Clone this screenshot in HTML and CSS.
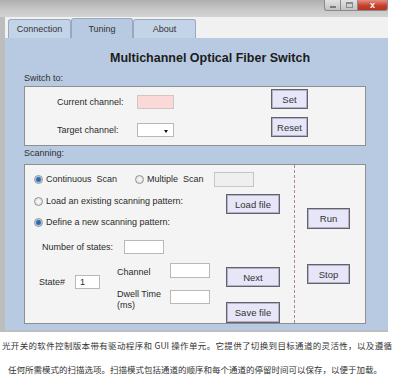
FILE: index.html
```html
<!DOCTYPE html>
<html>
<head>
<meta charset="utf-8">
<link rel="stylesheet" href="styles.css">
</head>
<body>
<div class="window">
  <div class="titlebar">
    <div class="winbtns">
      <span class="wb min"><span class="g-min"></span></span>
      <span class="wb max"><span class="g-max"></span></span>
      <span class="wb close">x</span>
    </div>
  </div>
  <div class="frame">
    <div class="tabstrip">
      <div class="tab">Connection</div>
      <div class="tab active">Tuning</div>
      <div class="tab">About</div>
    </div>
    <div class="panel">
      <h1 class="title">Multichannel Optical Fiber Switch</h1>
      <div class="section-label">Switch to:</div>
      <div class="box switch-box">
        <div class="switch-grid">
          <span class="lbl">Current channel:</span>
          <span class="field pink"></span>
          <span></span>
          <span class="btn">Set</span>
          <span class="lbl">Target channel:</span>
          <span class="field combo"><span class="arrow"></span></span>
          <span></span>
          <span class="btn">Reset</span>
        </div>
      </div>
      <div class="section-label scan-label">Scanning:</div>
      <div class="box scan-box">
        <div class="scan-left">
          <div class="row-a">
            <span class="opt opt1"><span class="radio on"></span>Continuous&nbsp; Scan</span>
            <span class="opt opt2"><span class="radio"></span>Multiple&nbsp; Scan</span>
            <span class="field disabled wide"></span>
          </div>
          <div class="row-b">
            <span class="opt opt-long"><span class="radio"></span>Load an existing scanning pattern:</span>
            <span class="btn btn-wide load">Load file</span>
          </div>
          <div class="row-c">
            <span class="opt"><span class="radio on"></span>Define a new scanning pattern:</span>
          </div>
          <div class="row-n">
            <span class="lbl num-lbl">Number of states:</span>
            <span class="field wide num-field"></span>
          </div>
          <div class="state-sec">
            <div class="col-state">
              <span class="lbl state-lbl">State#</span>
              <span class="field state-field">1</span>
            </div>
            <div class="col-labels">
              <div class="ch-lbl">Channel</div>
              <div class="dw-lbl">Dwell Time<br>(ms)</div>
            </div>
            <div class="col-fields">
              <span class="field wide ch-field"></span>
              <span class="field wide dw-field"></span>
            </div>
            <div class="col-btns">
              <span class="btn btn-wide next">Next</span>
              <span class="btn btn-wide save">Save file</span>
            </div>
          </div>
        </div>
        <div class="scan-right">
          <span class="btn btn-run run">Run</span>
          <span class="btn btn-run stop">Stop</span>
        </div>
      </div>
    </div>
  </div>
</div>
<p class="caption c1">光开关的软件控制版本带有驱动程序和 GUI 操作单元。它提供了切换到目标通道的灵活性，以及遵循</p>
<p class="caption c2">任何所需模式的扫描选项。扫描模式包括通道的顺序和每个通道的停留时间可以保存，以便于加载。</p>
</body>
</html>
```

FILE: styles.css
```css
* { box-sizing: border-box; }

body {
  margin: 0;
  width: 394px;
  height: 378px;
  overflow: hidden;
  background: #ffffff;
  font-family: "Liberation Sans", Arial, sans-serif;
  font-size: 9px;
  color: #2b2b2b;
}

.window { width: 388px; }

.titlebar {
  height: 17px;
  background: linear-gradient(#aeaeae, #c9c9c9 60%, #d3d3d3);
  display: flex;
  justify-content: flex-end;
  align-items: flex-start;
}

.winbtns { display: flex; height: 11px; }

.wb {
  display: flex;
  align-items: center;
  justify-content: center;
  height: 11px;
  border: 1px solid #8a8a8a;
  border-top: none;
}
.wb.min {
  width: 16px;
  background: linear-gradient(#e2e2e2, #c2c2c2);
  border-radius: 0 0 0 3px;
  border-right: none;
}
.wb.max {
  width: 17px;
  background: linear-gradient(#e2e2e2, #c2c2c2);
  border-right: none;
}
.wb.close {
  width: 31px;
  background: linear-gradient(#e39080, #c8412f 55%, #b8301f);
  border-radius: 0 0 3px 0;
  color: #ffffff;
  font-weight: bold;
  font-size: 9px;
  line-height: 9px;
}
.g-min { width: 6px; height: 2px; background: #fff; border: 1px solid #7a7a7a; margin-top: 4px; }
.g-max { width: 7px; height: 6px; border: 1px solid #8a8a8a; background: transparent; box-shadow: inset 0 1px 0 #8a8a8a; }

.frame {
  background: #bdbdbd;
  padding: 0 0 2px 5px;
}

.tabstrip {
  height: 21px;
  background: #f1f1f1;
  display: flex;
  align-items: flex-end;
  padding-left: 3px;
}

.tab {
  width: 63px;
  height: 19px;
  background: #c3d3e8;
  border: 1px solid #97a8bf;
  border-bottom: none;
  border-radius: 3px 3px 0 0;
  display: flex;
  align-items: center;
  justify-content: center;
  font-size: 9px;
  color: #333;
}
.tab.active {
  width: 62px;
  height: 20px;
  background: #b7cae2;
}

.panel {
  height: 292px;
  background: #b7cae2;
  padding: 0 0 0 19px;
  overflow: hidden;
}

.title {
  margin: 12px 0 0;
  padding-left: 86px;
  font-size: 12.5px;
  font-weight: bold;
  line-height: 16px;
  color: #1c1c1c;
}

.section-label {
  margin-top: 6px;
  line-height: 12px;
  color: #2f2f2f;
}
.scan-label { margin-top: 1px; }

.box {
  width: 342px;
  background: #f4f4f4;
  border: 1px solid #8f8f8f;
}

.switch-box {
  height: 60px;
  margin-top: 2px;
}

.switch-grid {
  display: grid;
  grid-template-columns: 80px 37px 97px 37px;
  grid-template-rows: 20px 20px;
  row-gap: 8px;
  padding: 2px 0 0 32px;
  align-items: end;
}

.lbl { line-height: 14px; }

.field {
  display: block;
  background: #ffffff;
  border: 1px solid #b9b9b9;
  height: 14px;
}
.pink { background: #fcd9d9; border-color: #d4c4c4; width: 37px; }
.combo {
  width: 37px;
  display: flex;
  align-items: center;
  justify-content: flex-end;
  padding-right: 5px;
}
.arrow {
  width: 0;
  height: 0;
  border-left: 2.5px solid transparent;
  border-right: 2.5px solid transparent;
  border-top: 3px solid #111;
  margin-top: 2px;
}
.field.disabled { background: #efefef; border-color: #c6c6c6; }
.wide { width: 40px; }

.btn {
  display: flex;
  align-items: center;
  justify-content: center;
  height: 20px;
  background: #e6e6f8;
  border: 1px solid #62626e;
  box-shadow: inset 0 0 0 1px #b3b3c6;
  font-size: 9.5px;
  color: #333;
}
.btn-wide { width: 54px; }
.btn-run { width: 43px; height: 21px; }

.scan-box {
  height: 160px;
  margin-top: 5px;
  display: flex;
}

.scan-left {
  width: 270px;
  height: 158px;
  border-right: 1px dashed #a98a8a;
  padding-top: 3px;
}

.opt {
  display: flex;
  align-items: center;
  white-space: nowrap;
}

.radio {
  width: 9px;
  height: 9px;
  border-radius: 50%;
  border: 1px solid #939393;
  background: radial-gradient(circle, #ffffff 0, #e4e4e4 60%, #d2d2d2 100%);
  margin-right: 3px;
  flex: none;
}
.radio.on {
  background: radial-gradient(circle, #2d67ad 0 1.8px, #6e9bcb 2.6px, #e6edf5 3.4px);
}

.row-a {
  display: flex;
  align-items: center;
  height: 22px;
  padding-left: 9px;
}
.opt1 { width: 101px; }
.opt2 { width: 79px; }
.row-a .field { height: 15px; }

.row-b {
  display: flex;
  align-items: flex-start;
  padding-left: 9px;
}
.row-b .opt { line-height: 22px; height: 22px; }
.opt-long { width: 192px; }
.load { margin-top: 4px; }

.row-c {
  display: flex;
  padding-left: 9px;
}
.row-c .opt { height: 16px; }

.row-n {
  display: flex;
  align-items: center;
  margin-top: 10px;
  padding-left: 17px;
}
.num-lbl { width: 82px; }

.state-sec {
  display: flex;
  align-items: flex-start;
  margin-top: 9px;
  padding-left: 14px;
}
.col-state {
  display: flex;
  align-items: center;
  margin-top: 12px;
}
.state-lbl { width: 36px; }
.state-field {
  width: 25px;
  padding-left: 4px;
  line-height: 12px;
  font-size: 9px;
}
.col-labels {
  width: 70px;
  padding-left: 17px;
}
.ch-lbl { line-height: 14px; margin-top: 2px; }
.dw-lbl { line-height: 11px; margin-top: 10px; }
.col-fields { display: flex; flex-direction: column; }
.ch-field { height: 15px; }
.dw-field { height: 14px; margin-top: 12px; }
.col-btns {
  display: flex;
  flex-direction: column;
  margin-left: 16px;
}
.next { margin-top: 4px; }
.save { margin-top: 15px; height: 21px; }

.scan-right {
  display: flex;
  flex-direction: column;
  padding: 43px 0 0 12px;
}
.stop { margin-top: 35px; height: 20px; }

.caption {
  margin: 0;
  font-family: "Noto Sans CJK SC", "Noto Sans", sans-serif;
  font-size: 8.5px;
  line-height: 16px;
  color: #333;
  white-space: nowrap;
}
.c1 {
  margin-top: 5px;
  width: 390px;
  margin-left: 2px;
  text-align: justify;
  text-align-last: justify;
}
.c2 {
  margin-top: 8px;
  padding-left: 8px;
}
```
